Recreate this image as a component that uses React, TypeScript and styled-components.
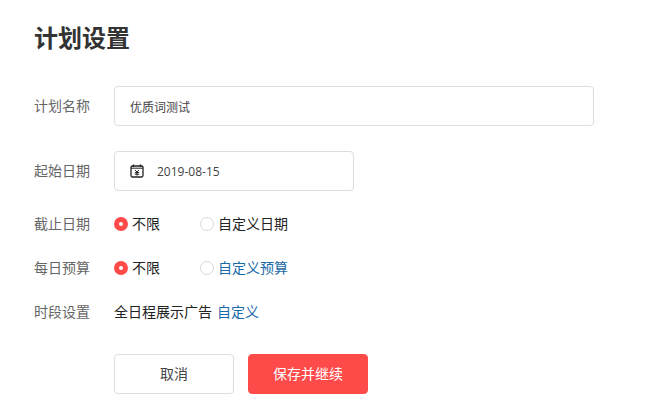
import styled, { createGlobalStyle } from "styled-components";

const GlobalStyle = createGlobalStyle`
  html, body {
    margin: 0;
    padding: 0;
    background: #fff;
    font-family: "Noto Sans CJK SC", "Noto Sans", sans-serif;
  }
`;

const Page = styled.div`
  width: 662px;
  height: 411px;
  box-sizing: border-box;
  padding: 20px 0 0 34px;
  overflow: hidden;
`;

const Title = styled.h1`
  margin: 0 0 30px;
  height: 36px;
  font-size: 24px;
  line-height: 34px;
  font-weight: 700;
  color: #333;
`;

const Row = styled.div<{ $height: number; $gap: number }>`
  display: flex;
  align-items: center;
  height: ${(props) => props.$height}px;
  margin-bottom: ${(props) => props.$gap}px;
`;

const Label = styled.div<{ $raised?: boolean }>`
  width: 80px;
  padding-bottom: ${(props) => (props.$raised ? 3 : 0)}px;
  font-size: 14px;
  color: #666;
`;

const Field = styled.div<{ $width: number }>`
  display: flex;
  align-items: center;
  box-sizing: border-box;
  width: ${(props) => props.$width}px;
  height: 40px;
  padding-left: 15px;
  border: 1px solid #ddd;
  border-radius: 4px;
  font-size: 12px;
  color: #444;
`;

const DateText = styled.span`
  margin-left: 13px;
  font-family: "Open Sans", "Noto Sans", sans-serif;
  font-size: 12px;
  color: #444;
`;

const Radio = styled.label<{ $width: number }>`
  display: flex;
  align-items: center;
  width: ${(props) => props.$width}px;
  font-size: 14px;
  color: #222;
`;

const Dot = styled.span<{ $on?: boolean }>`
  box-sizing: border-box;
  width: 14px;
  height: 14px;
  margin: 2px 4px 0 0;
  border-radius: 50%;
  background: #fff;
  border: ${(props) => (props.$on ? "5px solid #ff4a4a" : "1px solid #d8d8d8")};
`;

const Plain = styled.span`
  font-size: 14px;
  color: #222;
`;

const LinkText = styled.a<{ $left?: number }>`
  margin-left: ${(props) => props.$left ?? 0}px;
  font-size: 14px;
  color: #1a6aa8;
`;

const Actions = styled.div`
  display: flex;
  gap: 14px;
  margin: 23px 0 0 80px;
`;

const Button = styled.button<{ $primary?: boolean }>`
  width: 120px;
  height: 40px;
  padding: 0 0 2px;
  border-radius: 4px;
  border: 1px solid ${(props) => (props.$primary ? "#ff4a4a" : "#ddd")};
  background: ${(props) => (props.$primary ? "#ff4a4a" : "#fff")};
  color: ${(props) => (props.$primary ? "#fff" : "#444")};
  font-family: inherit;
  font-size: 14px;
`;

function CalendarIcon() {
  return (
    <svg width="14" height="14" viewBox="0 0 14 14" fill="none" stroke="#222">
      <rect x="1" y="2" width="12" height="11" rx="1.5" strokeWidth="1.3" />
      <path d="M3.5 0.5v2.5M10.5 0.5v2.5" strokeWidth="1.3" />
      <path d="M1 4.2h12" strokeWidth="1" />
      <path d="M5 6l2 2 2-2M4.8 8.6h4.4M4.8 10.2h4.4M7 8v3.6" strokeWidth="1" />
    </svg>
  );
}

export default function App() {
  return (
    <Page>
      <GlobalStyle />
      <Title>计划设置</Title>
      <Row $height={40} $gap={25}>
        <Label $raised>计划名称</Label>
        <Field $width={480}>优质词测试</Field>
      </Row>
      <Row $height={40} $gap={12}>
        <Label $raised>起始日期</Label>
        <Field $width={240}>
          <CalendarIcon />
          <DateText>2019-08-15</DateText>
        </Field>
      </Row>
      <Row $height={40} $gap={4}>
        <Label>截止日期</Label>
        <Radio $width={86}>
          <Dot $on />
          不限
        </Radio>
        <Radio $width={100}>
          <Dot />
          自定义日期
        </Radio>
      </Row>
      <Row $height={40} $gap={4}>
        <Label>每日预算</Label>
        <Radio $width={86}>
          <Dot $on />
          不限
        </Radio>
        <Radio $width={100}>
          <Dot />
          <LinkText>自定义预算</LinkText>
        </Radio>
      </Row>
      <Row $height={40} $gap={0}>
        <Label>时段设置</Label>
        <Plain>全日程展示广告</Plain>
        <LinkText $left={5}>自定义</LinkText>
      </Row>
      <Actions>
        <Button>取消</Button>
        <Button $primary>保存并继续</Button>
      </Actions>
    </Page>
  );
}
